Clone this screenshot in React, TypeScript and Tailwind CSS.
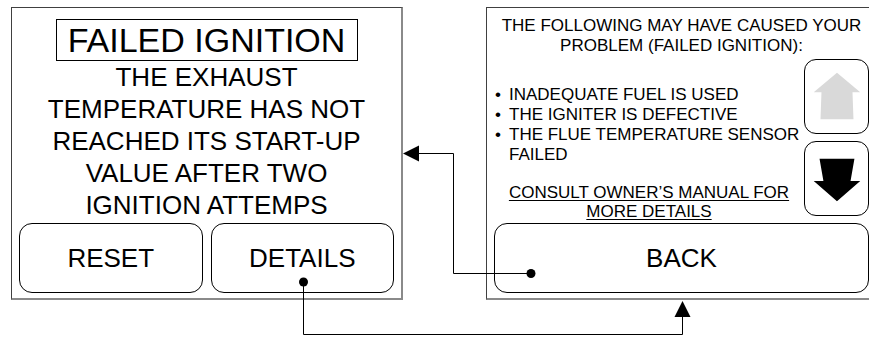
const FONT = "font-['Liberation_Sans',Arial,Helvetica,sans-serif]";

const PANEL =
  'h-[293px] w-[392px] shrink-0 border-l border-t border-r-2 border-b-2 border-[#404040] border-r-[#8a8a8a] border-b-[#8a8a8a] bg-white';

const MESSAGE = ['THE EXHAUST', 'TEMPERATURE HAS NOT', 'REACHED ITS START-UP', 'VALUE AFTER TWO', 'IGNITION ATTEMPS'];

function TouchButton({ label, className = '' }: { label: string; className?: string }) {
  return (
    <div
      className={`flex h-[70px] items-center justify-center rounded-[13px] border border-black text-[26px] leading-none ${className}`}
    >
      {label}
    </div>
  );
}

function ErrorScreen() {
  return (
    <div className={`${PANEL} flex flex-col items-center px-[7px] pt-[11px] pb-[5px]`}>
      <div className="h-[42px] w-[302px] border border-black text-center text-[34px] leading-[40px]">
        FAILED IGNITION
      </div>
      <div className="w-full text-center text-[26px] leading-[32px]">
        {MESSAGE.map((line) => (
          <div key={line}>{line}</div>
        ))}
      </div>
      <div className="mt-auto flex w-full gap-[8px]">
        <TouchButton label="RESET" className="flex-1" />
        <TouchButton label="DETAILS" className="flex-1" />
      </div>
    </div>
  );
}

function Bullet({ children }: { children: React.ReactNode }) {
  return (
    <div className="flex">
      <span className="w-[15px] shrink-0 pl-[1px]">•</span>
      <span>{children}</span>
    </div>
  );
}

function DetailsScreen() {
  return (
    <div className={`${PANEL} flex flex-col pt-[8px] pb-[5px]`}>
      <div className="text-center text-[17px] leading-[20px]">
        <div>THE FOLLOWING MAY HAVE CAUSED YOUR</div>
        <div>PROBLEM (FAILED IGNITION):</div>
      </div>

      <div className="mt-[3px] flex h-[157px] px-[7px]">
        <div className="flex-1 pt-[26px] text-[17px] leading-[20px]">
          <Bullet>INADEQUATE FUEL IS USED</Bullet>
          <Bullet>THE IGNITER IS DEFECTIVE</Bullet>
          <Bullet>
            THE FLUE TEMPERATURE SENSOR
            <br />
            FAILED
          </Bullet>
          <div className="mt-[18px] text-center leading-[19px] underline underline-offset-2">
            <div>CONSULT OWNER’S MANUAL FOR</div>
            <div>MORE DETAILS</div>
          </div>
        </div>
        <div className="flex w-[65px] shrink-0 flex-col gap-[7px]">
          <div className="flex h-[75px] items-center justify-center rounded-[12px] border border-black">
            <svg width="65" height="75" viewBox="0 0 65 75">
              <polygon points="33,13 57,33 49,33 50,61 16,61 17,33 9,33" fill="#d9d9d9" />
            </svg>
          </div>
          <div className="flex h-[75px] items-center justify-center rounded-[12px] border border-black">
            <svg width="65" height="75" viewBox="0 0 65 75">
              <polygon points="15,17 51,17 47,40 57,40 33,61 9,40 19,40" fill="#000" />
            </svg>
          </div>
        </div>
      </div>

      <TouchButton label="BACK" className="mx-[7px] mt-[7px]" />
    </div>
  );
}

export default function App() {
  return (
    <div className={`relative h-[337px] w-[869px] overflow-hidden bg-white text-black ${FONT}`}>
      <div className="flex gap-[83px] pl-[11px] pt-[7px]">
        <ErrorScreen />
        <DetailsScreen />
      </div>

      {/* navigation connectors between the two screens */}
      <svg className="pointer-events-none absolute inset-0" width="869" height="337" viewBox="0 0 869 337">
        <g stroke="#000" strokeWidth="1" fill="none">
          <path d="M303.5 282 V334.5 H682.5 V316" />
          <path d="M531 273.5 H453.5 V153.5 H418" />
        </g>
        <circle cx="303.5" cy="282" r="4.5" fill="#000" />
        <circle cx="531" cy="273.5" r="4.5" fill="#000" />
        <polygon points="682.5,301 674.5,317 690.5,317" fill="#000" />
        <polygon points="403,153.5 419,145.5 419,161.5" fill="#000" />
      </svg>
    </div>
  );
}
